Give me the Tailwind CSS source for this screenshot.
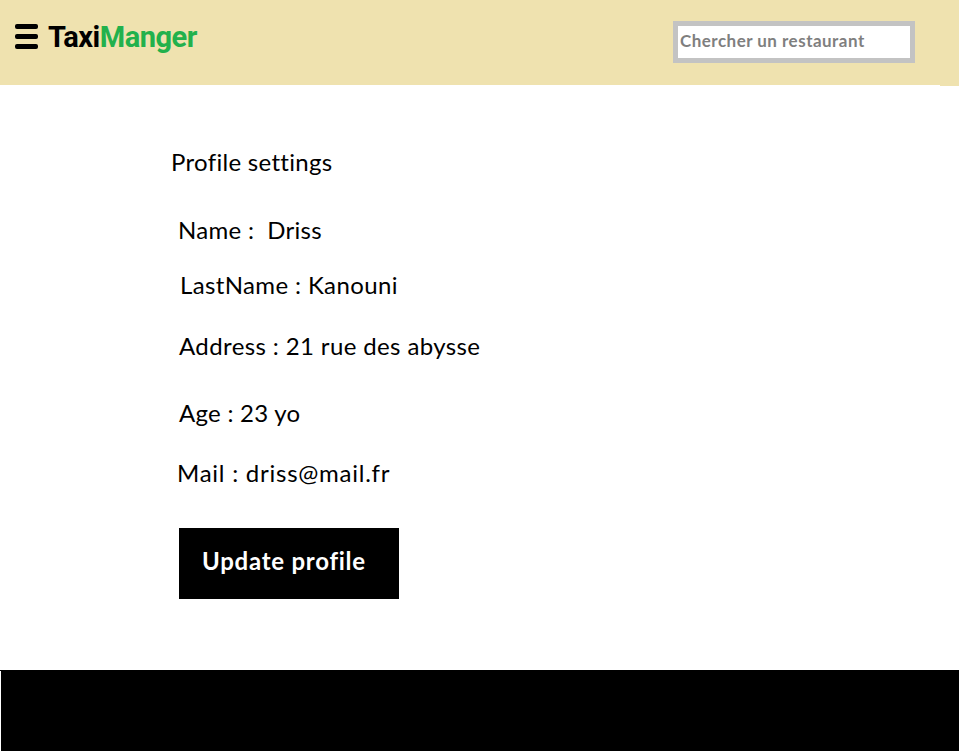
<!DOCTYPE html>
<html lang="en">
<head>
<meta charset="utf-8">
<title>TaxiManger</title>
<script src="https://cdn.jsdelivr.net/npm/@tailwindcss/browser@4"></script>
</head>
<body class="flex h-[751px] w-[959px] flex-col overflow-hidden bg-white font-['Lato',sans-serif] text-black [font-variant-ligatures:none]">
<header class="relative flex h-[85px] shrink-0 items-start bg-[#efe2af]">
  <button class="mt-6 ml-[15px] block" aria-label="Menu">
    <svg class="block" width="23" height="25" viewBox="0 0 23 25"><rect width="23" height="5" rx="2"/><rect y="10" width="23" height="5" rx="2"/><rect y="20" width="23" height="5" rx="2"/></svg>
  </button>
  <h1 class="mt-[19px] ml-[10px] font-['Roboto',sans-serif] text-[29px] leading-9 font-bold tracking-[-0.5px] whitespace-nowrap">Taxi<span class="text-[#22b14c]">Manger</span></h1>
  <input class="mt-[21px] mr-11 ml-auto h-[42px] w-[242px] border-5 border-[#c3c3c3] bg-white pb-[3px] pl-[2px] text-[17px] font-bold tracking-[0.48px] text-[#7f7f7f] placeholder:text-[#7f7f7f]" placeholder="Chercher un restaurant">
  <div class="absolute top-full right-0 h-px w-[19px] bg-[#efe2af]"></div>
</header>
<main class="flex h-[585px] shrink-0 flex-col items-start pt-[62px] pl-[171px] text-[24px] leading-[30px] whitespace-pre">
  <h2 class="tracking-[0.3px]">Profile settings</h2>
  <p class="mt-[38px] ml-[7px] tracking-[0.3px]">Name :  Driss</p>
  <p class="mt-[25px] ml-[9px] tracking-[0.37px]">LastName : Kanouni</p>
  <p class="mt-[31px] ml-[8px] tracking-[0.38px]">Address : 21 rue des abysse</p>
  <p class="mt-[37px] ml-[8px] tracking-[0.27px]">Age : 23 yo</p>
  <p class="mt-[30px] ml-[6px] tracking-[0.75px]">Mail : driss@mail.fr</p>
  <button class="mt-[40px] ml-[8px] flex h-[71px] w-[220px] items-start bg-black pt-[18px] pl-[23px] font-bold tracking-[0.75px] text-white">Update profile</button>
</main>
<footer class="flex-1 border-t border-black pl-px"><div class="h-full bg-black"></div></footer>
</body>
</html>
